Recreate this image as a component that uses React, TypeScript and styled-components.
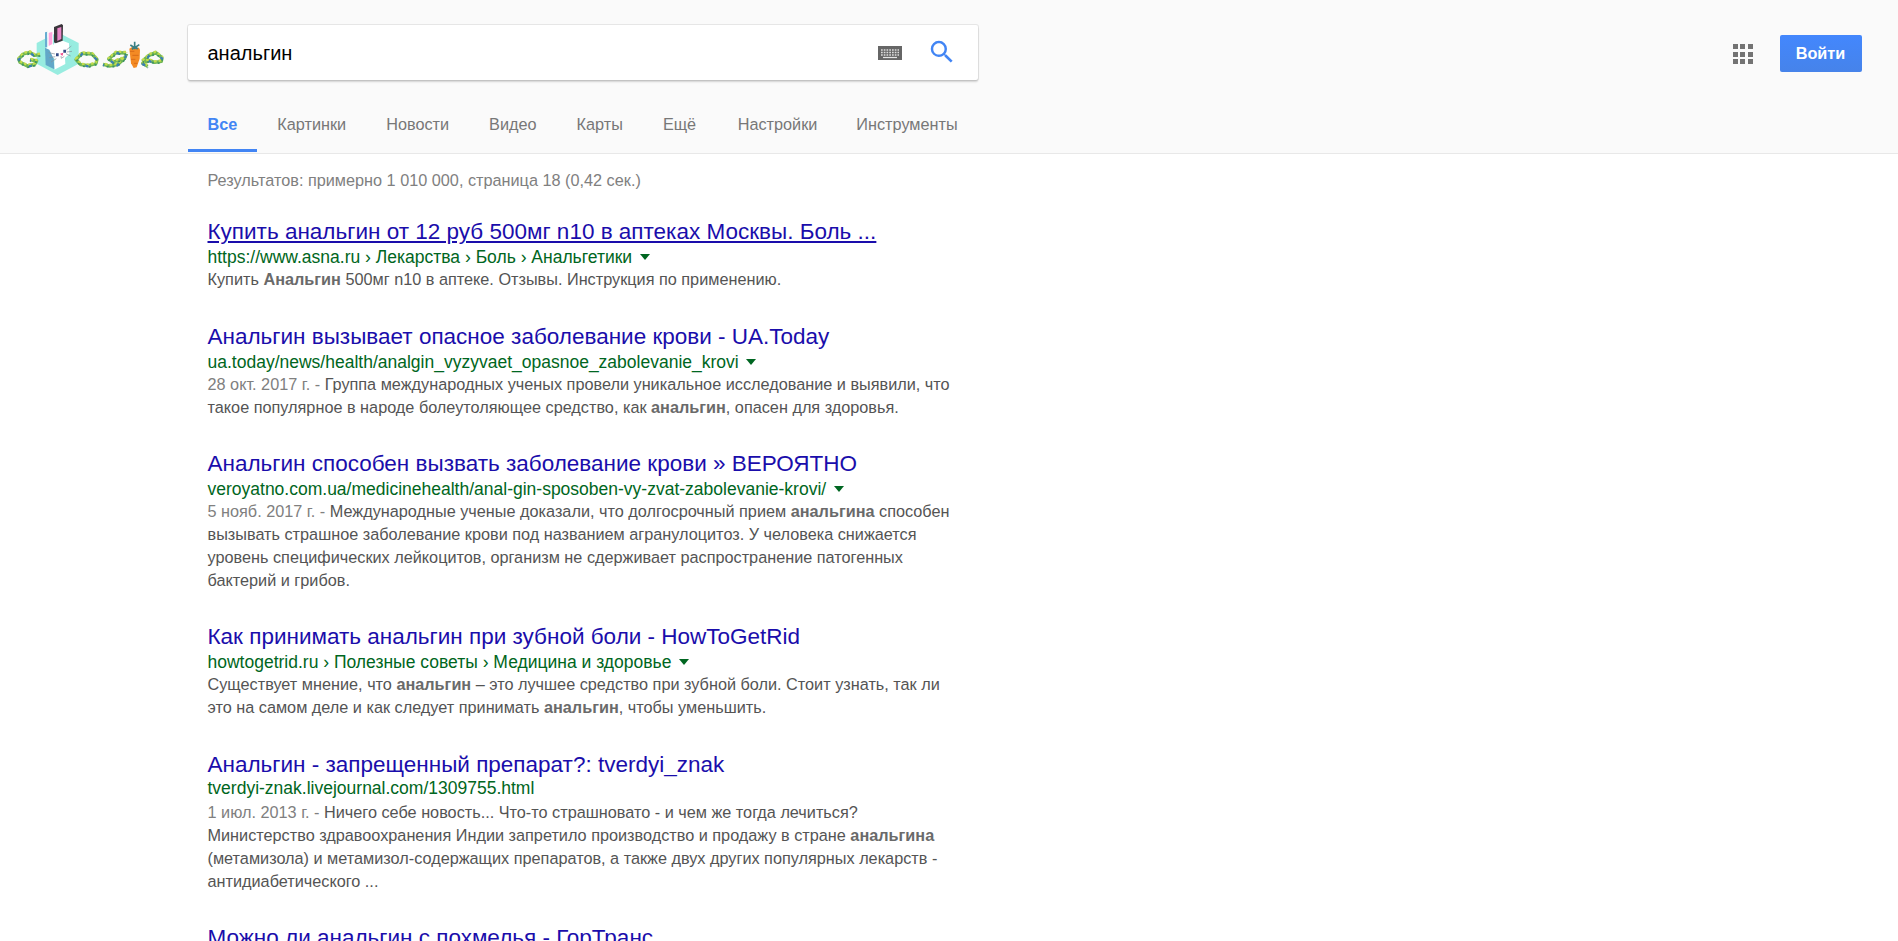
import React from 'react';
import styled, { createGlobalStyle } from 'styled-components';

const GlobalStyle = createGlobalStyle`
  html, body { margin: 0; padding: 0; background: #fff; }
  body {
    height: 941px;
    overflow: hidden;
    font-family: 'Liberation Sans', Arial, sans-serif;
    font-size: 16.25px;
    color: #545454;
  }
  *, *::before, *::after { box-sizing: border-box; }
`;

const Page = styled.div`
  height: 941px;
  overflow: hidden;
`;

const Header = styled.header`
  height: 154px;
  background: #fafafa;
  border-bottom: 1px solid #e8e8e8;
`;

const TopBar = styled.div`
  display: flex;
  align-items: flex-start;
  height: 100px;
`;

const LogoLink = styled.a`
  display: block;
  width: 188px;
  height: 80px;
  padding-top: 10px;
`;

const SearchBox = styled.form`
  display: flex;
  align-items: center;
  width: 790px;
  height: 55px;
  margin-top: 25px;
  padding-left: 19.5px;
  background: #fff;
  border-radius: 2px;
  box-shadow: 0 2px 2px 0 rgba(0, 0, 0, 0.16), 0 0 0 1px rgba(0, 0, 0, 0.08);
`;

const Query = styled.div`
  flex: 1;
  font-size: 20px;
  line-height: 24px;
  padding-top: 1px;
  color: #000;
`;

const KeyboardIcon = styled.svg`
  display: block;
  width: 24px;
  height: 14px;
  margin: 1px 25px 0 0;
`;

const SearchIcon = styled.svg`
  display: block;
  width: 30px;
  height: 30px;
  margin: 0 21px 1px 0;
`;

const Account = styled.div`
  display: flex;
  align-items: center;
  margin: 35px 36px 0 auto;
`;

const AppsIcon = styled.svg`
  display: block;
  width: 20px;
  height: 20px;
  margin-right: 27px;
`;

const SignIn = styled.button`
  width: 82px;
  height: 37px;
  padding: 0 1px 0 0;
  border: 0;
  border-radius: 2px;
  background: linear-gradient(to bottom, #4387fd, #4683ea);
  color: #fff;
  font: bold 16.25px/37px 'Liberation Sans', Arial, sans-serif;
`;

const Tabs = styled.nav`
  display: flex;
  height: 52px;
  margin-left: 187.5px;
`;

const Tab = styled.a<{ $active?: boolean; $tool?: boolean }>`
  height: 52px;
  padding: 0 ${p => (p.$tool ? 19 : 20)}px 0 ${p => (p.$tool ? 21.5 : 20)}px;
  line-height: 48px;
  color: ${p => (p.$active ? '#4285f4' : '#777')};
  font-weight: ${p => (p.$active ? 'bold' : 'normal')};
  border-bottom: 3px solid ${p => (p.$active ? '#4285f4' : 'transparent')};
`;

const Main = styled.main`
  width: 978px;
  padding-left: 207.5px;
`;

const Stats = styled.div`
  height: 64.2px;
  padding-top: 16px;
  line-height: 20px;
  color: #808080;
`;

const Result = styled.article`
  margin-bottom: 32px;
`;

const Title = styled.h3<{ $focused?: boolean }>`
  height: 28px;
  margin: 0;
  font-size: 22.5px;
  font-weight: normal;
  line-height: 27px;
  white-space: nowrap;
  color: #1a0dab;
  text-decoration: ${p => (p.$focused ? 'underline' : 'none')};
`;

const Address = styled.div<{ $compact?: boolean }>`
  display: flex;
  align-items: center;
  height: ${p => (p.$compact ? 22.5 : 22)}px;
  padding-bottom: ${p => (p.$compact ? 4 : 0)}px;
  font-size: 17.5px;
  line-height: 22px;
  white-space: nowrap;
  color: #006621;
`;

const Caret = styled.span`
  margin: 0 0 0 7.5px;
  border: solid transparent;
  border-width: 6px 5px 0;
  border-top-color: #006621;
`;

const Snippet = styled.div`
  line-height: 22.75px;
  white-space: nowrap;
  b { color: #6a6a6a; }
`;

const Published = styled.span`
  color: #808080;
`;

const snakes = [
  'M120 134 L104 136 L90 127 L70 132 L56 147 L60 157 L82 168 L104 163 L110 153 L90 149',
  'M228 149 L246 130 L276 132 L291 148 L288 160 L266 167 L242 164 Z',
  'M378 129 L348 128 L326 147 L340 156 L374 144 L380 130 M372 147 L352 164 L328 168 L309 163',
  'M427 154 L447 136 L467 128 L486 143 L484 154 L464 157 L444 150 M446 151 L428 160 L443 169',
];

function Logo() {
  return (
    <svg width="188" height="80" viewBox="0 0 564 240">
      <polygon points="173,67 236,99 236,161 173,195 110,161 110,99" fill="#98ece0" />
      {snakes.map(d => (
        <g key={d} fill="none" strokeLinejoin="round">
          <path d={d} stroke="#6fb653" strokeWidth="10" />
          <path d={d} stroke="#c3db4c" strokeWidth="7" strokeDasharray="8 6" transform="translate(0 -3)" />
          <path d={d} stroke="#3d9164" strokeWidth="5" strokeDasharray="6 12" transform="translate(1 4)" />
          <path d={d} stroke="#3a7fb4" strokeWidth="7" strokeDasharray="9 38" strokeDashoffset="-20" transform="translate(0 2)" />
        </g>
      ))}
      <path d="M136 113 L160 104 L166 97 L188 92 L207 100 L208 132 L195 144 L196 162 L163 179 L163 145 L143 138 L137 124Z" fill="#fff" />
      <path d="M135 113 L148 119 L161 146 L163 178 L137 165Z" fill="#62a7c8" />
      <path d="M135 67 L142 65 L142 112 L135 112Z" fill="#67add1" />
      <path d="M142 65 L159 66 L159 108 L142 112Z" fill="#fff" />
      <path d="M146 68 L157 66 L157 102 L146 108Z" fill="#ffa5dd" />
      <path d="M162 51 L185 42 L189 46 L188 92 L167 100 L162 97Z" fill="#3b363c" />
      <path d="M172 55 L184 51 L184 87 L172 93Z" fill="#e986c8" />
      <path d="M168 130 h8 v9 h-8Z M190 119 h8 v9 h-8Z" fill="#344b85" />
      <path d="M180 131 L190 128 L187 138Z" fill="#f04487" />
      <path d="M165 132 L146 128 M166 140 L148 143 M169 146 L153 156 M199 120 L214 108 M200 126 L216 124 M198 131 L212 138 M183 138 L184 145 L193 139" fill="none" stroke="#829098" strokeWidth="2" />
      <path d="M388 116 L396 111 L417 113 L420 120 L419 146 L410 172 L401 174 L393 160Z" fill="#f38a24" />
      <path d="M390 124 H403 M397 136 H416 M393 148 H406 M402 160 H412" stroke="#d96d19" strokeWidth="3" />
      <path d="M404 95 V118 M391 105 L404 113 L418 104 M396 118 L404 110 L413 117" fill="none" stroke="#397f83" strokeWidth="5" />
    </svg>
  );
}

const tabs = ['Все', 'Картинки', 'Новости', 'Видео', 'Карты', 'Ещё', 'Настройки', 'Инструменты'];

interface Entry {
  title: string;
  url: string;
  menu?: boolean;
  date?: string;
  lines: React.ReactNode[];
}

const entries: Entry[] = [
  {
    title: 'Купить анальгин от 12 руб 500мг n10 в аптеках Москвы. Боль ...',
    url: 'https://www.asna.ru › Лекарства › Боль › Анальгетики',
    menu: true,
    lines: [<>Купить <b>Анальгин</b> 500мг n10 в аптеке. Отзывы. Инструкция по применению.</>],
  },
  {
    title: 'Анальгин вызывает опасное заболевание крови - UA.Today',
    url: 'ua.today/news/health/analgin_vyzyvaet_opasnoe_zabolevanie_krovi',
    menu: true,
    date: '28 окт. 2017 г. - ',
    lines: [
      'Группа международных ученых провели уникальное исследование и выявили, что',
      <>такое популярное в народе болеутоляющее средство, как <b>анальгин</b>, опасен для здоровья.</>,
    ],
  },
  {
    title: 'Анальгин способен вызвать заболевание крови » ВЕРОЯТНО',
    url: 'veroyatno.com.ua/medicinehealth/anal-gin-sposoben-vy-zvat-zabolevanie-krovi/',
    menu: true,
    date: '5 нояб. 2017 г. - ',
    lines: [
      <>Международные ученые доказали, что долгосрочный прием <b>анальгина</b> способен</>,
      'вызывать страшное заболевание крови под названием агранулоцитоз. У человека снижается',
      'уровень специфических лейкоцитов, организм не сдерживает распространение патогенных',
      'бактерий и грибов.',
    ],
  },
  {
    title: 'Как принимать анальгин при зубной боли - HowToGetRid',
    url: 'howtogetrid.ru › Полезные советы › Медицина и здоровье',
    menu: true,
    lines: [
      <>Существует мнение, что <b>анальгин</b> – это лучшее средство при зубной боли. Стоит узнать, так ли</>,
      <>это на самом деле и как следует принимать <b>анальгин</b>, чтобы уменьшить.</>,
    ],
  },
  {
    title: 'Анальгин - запрещенный препарат?: tverdyi_znak',
    url: 'tverdyi-znak.livejournal.com/1309755.html',
    date: '1 июл. 2013 г. - ',
    lines: [
      'Ничего себе новость... Что-то страшновато - и чем же тогда лечиться?',
      <>Министерство здравоохранения Индии запретило производство и продажу в стране <b>анальгина</b></>,
      '(метамизола) и метамизол-содержащих препаратов, а также двух других популярных лекарств -',
      'антидиабетического ...',
    ],
  },
];

export default function App() {
  return (
    <Page>
      <GlobalStyle />
      <Header>
        <TopBar>
          <LogoLink><Logo /></LogoLink>
          <SearchBox>
            <Query>анальгин</Query>
            <KeyboardIcon viewBox="0 0 24 14">
              <path d="M0 0h24v14H0z" fill="#666" />
              <path d="M3 4h18M3 6.5h18M3 9h18" stroke="#ddd" strokeWidth="1.5" strokeDasharray="1.7 1.05" />
              <path d="M5 11.5h14" stroke="#e4e4e4" strokeWidth="1.2" />
            </KeyboardIcon>
            <SearchIcon viewBox="0 0 24 24" fill="#4285f4">
              <path d="M15.5 14h-.79l-.28-.27A6.471 6.471 0 0 0 16 9.5 6.5 6.5 0 1 0 9.5 16c1.61 0 3.09-.59 4.23-1.57l.27.28v.79l5 4.99L20.49 19l-4.99-5zm-6 0C7.01 14 5 11.99 5 9.5S7.01 5 9.5 5 14 7.01 14 9.5 11.99 14 9.5 14z" />
            </SearchIcon>
          </SearchBox>
          <Account>
            <AppsIcon viewBox="0 0 20 20" fill="#737373">
              {[0, 8, 15].map(y => [0, 7, 15].map(x => <rect key={`${x}-${y}`} x={x} y={y} width="5" height="5" />))}
            </AppsIcon>
            <SignIn>Войти</SignIn>
          </Account>
        </TopBar>
        <Tabs>
          {tabs.map((t, i) => <Tab key={t} $active={i === 0} $tool={t === 'Настройки'}>{t}</Tab>)}
        </Tabs>
      </Header>
      <Main>
        <Stats>Результатов: примерно 1 010 000, страница 18 (0,42 сек.)</Stats>
        {entries.map((e, i) => (
          <Result key={e.url}>
            <Title $focused={i === 0}>{e.title}</Title>
            <Address $compact={!e.menu}>{e.url}{e.menu && <Caret />}</Address>
            {e.lines.map((line, n) => (
              <Snippet key={n}>
                {n === 0 && e.date && <Published>{e.date}</Published>}
                {line}
              </Snippet>
            ))}
          </Result>
        ))}
        <Result>
          <Title>Можно ли анальгин с похмелья - ГорТранс</Title>
        </Result>
      </Main>
    </Page>
  );
}
